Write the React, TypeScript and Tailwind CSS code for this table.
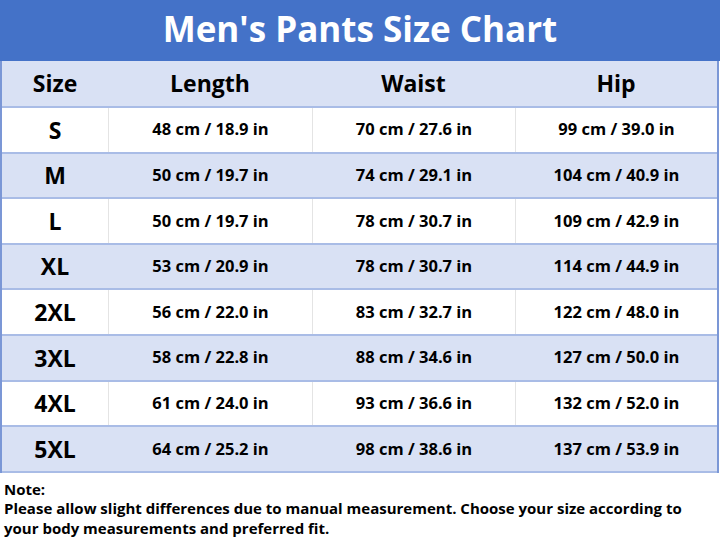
import React from "react";

const rows = [
  ["S", "48 cm / 18.9 in", "70 cm / 27.6 in", "99 cm / 39.0 in"],
  ["M", "50 cm / 19.7 in", "74 cm / 29.1 in", "104 cm / 40.9 in"],
  ["L", "50 cm / 19.7 in", "78 cm / 30.7 in", "109 cm / 42.9 in"],
  ["XL", "53 cm / 20.9 in", "78 cm / 30.7 in", "114 cm / 44.9 in"],
  ["2XL", "56 cm / 22.0 in", "83 cm / 32.7 in", "122 cm / 48.0 in"],
  ["3XL", "58 cm / 22.8 in", "88 cm / 34.6 in", "127 cm / 50.0 in"],
  ["4XL", "61 cm / 24.0 in", "93 cm / 36.6 in", "132 cm / 52.0 in"],
  ["5XL", "64 cm / 25.2 in", "98 cm / 38.6 in", "137 cm / 53.9 in"],
];

export default function App() {
  return (
    <div
      className="w-[720px] h-[545px] bg-white text-black overflow-hidden"
      style={{ fontFamily: '"Open Sans", "Noto Sans", sans-serif' }}
    >
      <div className="h-[61px] bg-[#4472c8] flex items-center justify-center text-white font-bold text-[35px] pb-[2px]">
        Men's Pants Size Chart
      </div>
      <div className="w-[719px] border-l-2 border-r-2 border-[#7b97d6]">
        <div className="grid grid-cols-[106px_204px_203px_1fr] h-[47px] bg-[#d9e1f4] border-b-2 border-[#a9bce6] font-bold text-[23px] items-center text-center">
          <div>Size</div>
          <div>Length</div>
          <div>Waist</div>
          <div>Hip</div>
        </div>
        {rows.map((r, i) => {
          const alt = i % 2 === 1;
          return (
            <div
              key={r[0]}
              className={
                "grid grid-cols-[106px_204px_203px_1fr] h-[45.6px] border-b-2 border-[#a9bce6] items-stretch text-center font-bold " +
                (alt ? "bg-[#d9e1f4]" : "bg-white")
              }
            >
              <div className="flex items-center justify-center text-[23px]">{r[0]}</div>
              <div className={"flex items-center justify-center text-[16.5px] border-l " + (alt ? "border-transparent" : "border-[#e4e4e4]")}>{r[1]}</div>
              <div className={"flex items-center justify-center text-[16.5px] border-l " + (alt ? "border-transparent" : "border-[#e4e4e4]")}>{r[2]}</div>
              <div className={"flex items-center justify-center text-[16.5px] border-l " + (alt ? "border-transparent" : "border-[#e4e4e4]")}>{r[3]}</div>
            </div>
          );
        })}
      </div>
      <div className="px-[4px] pt-[7px] font-bold text-[15px] leading-[19.5px]">
        <div>Note:</div>
        <div>
          Please allow slight differences due to manual measurement. Choose your size according to
          your body measurements and preferred fit.
        </div>
      </div>
    </div>
  );
}
